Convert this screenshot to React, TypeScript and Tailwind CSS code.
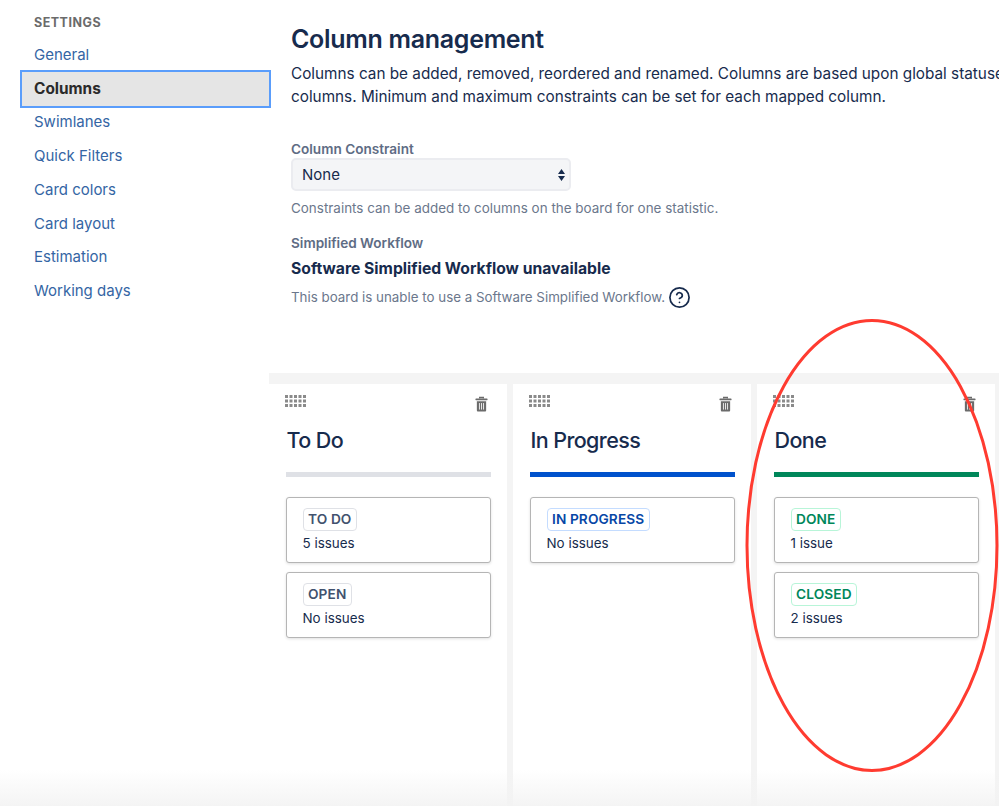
import { CircleHelp } from "lucide-react";

const navItems = [
  "General",
  "Columns",
  "Swimlanes",
  "Quick Filters",
  "Card colors",
  "Card layout",
  "Estimation",
  "Working days",
];

type Status = { name: string; count: string };
type Column = {
  title: string;
  stripe: string;
  lozenge: string;
  statuses: Status[];
};

const columns: Column[] = [
  {
    title: "To Do",
    stripe: "bg-[#dfe1e6]",
    lozenge: "border-[#dfe1e6] text-[#42526e]",
    statuses: [
      { name: "TO DO", count: "5 issues" },
      { name: "OPEN", count: "No issues" },
    ],
  },
  {
    title: "In Progress",
    stripe: "bg-[#0052cc]",
    lozenge: "border-[#c4dcff] text-[#0747a6]",
    statuses: [{ name: "IN PROGRESS", count: "No issues" }],
  },
  {
    title: "Done",
    stripe: "bg-[#00875a]",
    lozenge: "border-[#b8f5d8] text-[#00875a]",
    statuses: [
      { name: "DONE", count: "1 issue" },
      { name: "CLOSED", count: "2 issues" },
    ],
  },
];

function DragHandle() {
  return (
    <svg width="22" height="12" viewBox="0 0 22 12" fill="#8a8a8a" className="-ml-[1px]">
      {[0, 1, 2].map((row) =>
        [0, 1, 2, 3, 4].map((col) => (
          <rect key={`${row}-${col}`} x={col * 4.5} y={row * 4.5} width="3" height="3" />
        ))
      )}
    </svg>
  );
}

function TrashIcon() {
  return (
    <svg width="13" height="16" viewBox="0 0 14 16">
      <path d="M5 2V1h4v1" fill="none" stroke="#6b6b6b" strokeWidth="1.4" />
      <rect x="0.5" y="2" width="13" height="2" rx="0.5" fill="#6b6b6b" />
      <path d="M2 5h10v10a1 1 0 0 1-1 1H3a1 1 0 0 1-1-1z" fill="#6b6b6b" />
      <path d="M4.800 7v7M7 7v7M9.200 7v7" stroke="#fff" strokeWidth="0.9" />
    </svg>
  );
}

function BoardColumn({ column }: { column: Column }) {
  return (
    <div className="w-[238px] shrink-0 bg-white pl-[17px] pr-4 pt-[11px]">
      <div className="flex items-start justify-between pr-[3px]">
        <DragHandle />
        <div className="pt-[1px]">
          <TrashIcon />
        </div>
      </div>
      <h3 className="mt-[13px] pl-[0.500px] text-[21.5px] leading-[30px] font-medium tracking-[-0.6px] text-[#172b4d]">
        {column.title}
      </h3>
      <div className={`mt-[17px] h-[5px] ${column.stripe}`} />
      <div className="mt-5 flex flex-col gap-[9px]">
        {column.statuses.map((status) => (
          <div
            key={status.name}
            className="h-[66px] rounded-[3px] border border-[#b5b5b5] bg-white pl-[15.500px] pt-[10px] shadow-[0_1px_3px_rgba(0,0,0,0.12)]"
          >
            <span
              className={`block h-[23px] w-fit rounded-[4px] border-[1.500px] px-[4.500px] text-[13.700px] leading-[20px] font-semibold tracking-[0.1px] ${column.lozenge}`}
            >
              {status.name}
            </span>
            <p className="mt-[1px] text-[13.400px] leading-[22px] text-[#172b4d]">{status.count}</p>
          </div>
        ))}
      </div>
    </div>
  );
}

export default function App() {
  return (
    <div className="relative flex h-[806px] w-[999px] overflow-hidden bg-white font-['Inter',sans-serif]">
      {/* Sidebar */}
      <aside className="w-[269px] shrink-0 pl-5 pt-[15px]">
        <h4 className="pl-[14px] text-[12.5px] leading-4 font-bold tracking-[0.5px] text-[#6b6b6b]">SETTINGS</h4>
        <nav className="mt-[7.500px] flex w-[251px] flex-col">
          {navItems.map((item) =>
            item === "Columns" ? (
              <a
                key={item}
                className="my-[-2px] flex h-[37.700px] items-center border-2 border-[#5a9dfb] bg-[#e5e5e5] pl-3 text-[15.400px] font-bold text-[#2a2a2a]"
              >
                {item}
              </a>
            ) : (
              <a key={item} className="flex h-[33.700px] items-center pl-[14px] text-[15px] text-[#3465a4]">
                {item}
              </a>
            )
          )}
        </nav>
      </aside>

      {/* Main */}
      <main className="min-w-0 flex-1">
        <div className="pl-[22px] pt-[22px]">
          <h1 className="text-[25px] leading-[34px] font-semibold tracking-[-0.3px] whitespace-nowrap text-[#172b4d]">
            Column management
          </h1>
          <p className="mt-[6px] text-[15.300px] leading-[23px] whitespace-nowrap text-[#172b4d]">
            Columns can be added, removed, reordered and renamed. Columns are based upon global statuses and can be
            <br />
            columns. Minimum and maximum constraints can be set for each mapped column.
          </p>
          <label className="mt-[32px] block text-[13.600px] leading-[18px] font-semibold text-[#5e6c84]">
            Column Constraint
          </label>
          <div className="flex h-[33px] w-[280px] items-center justify-between rounded-[5px] border-2 border-[#ebecf0] bg-[#f4f5f7] pl-[9px] pr-[3px] pt-[1px] text-[15px] text-[#172b4d]">
            <span>None</span>
            <svg width="9" height="14" viewBox="0 0 9 14" fill="#172b4d">
              <path d="M4.500 1 8 6H1zM1 8h7l-3.500 5z" />
            </svg>
          </div>
          <p className="mt-[8px] text-[13.450px] leading-[18px] text-[#6b778c]">
            Constraints can be added to columns on the board for one statistic.
          </p>
          <h5 className="mt-[17px] text-[13.600px] leading-[18px] font-semibold text-[#5e6c84]">Simplified Workflow</h5>
          <p className="mt-[6px] text-[15.700px] leading-[22px] font-bold text-[#172b4d]">
            Software Simplified Workflow unavailable
          </p>
          <div className="mt-[6px] flex h-[22px] items-center gap-[3px]">
            <span className="text-[13.350px] text-[#6b778c]">
              This board is unable to use a Software Simplified Workflow.
            </span>
            <CircleHelp size={23} strokeWidth={1.8} className="text-[#172b4d]" />
          </div>
        </div>

        {/* Board */}
        <div className="mt-[64.500px] flex h-[433px] gap-[6px] bg-[#f4f4f4] pt-[11px]">
          {columns.map((column) => (
            <BoardColumn key={column.title} column={column} />
          ))}
        </div>
      </main>

      {/* Fade at the foot of the picture */}
      <div className="pointer-events-none absolute inset-x-0 bottom-0 h-[36px] bg-gradient-to-b from-transparent to-[#f3f3f3]/90" />

      {/* Red annotation */}
      <svg className="pointer-events-none absolute left-0 top-0" width="999" height="806">
        <ellipse cx="872" cy="545.500" rx="125" ry="225" fill="none" stroke="#ff3b30" strokeWidth="3" />
      </svg>
    </div>
  );
}
